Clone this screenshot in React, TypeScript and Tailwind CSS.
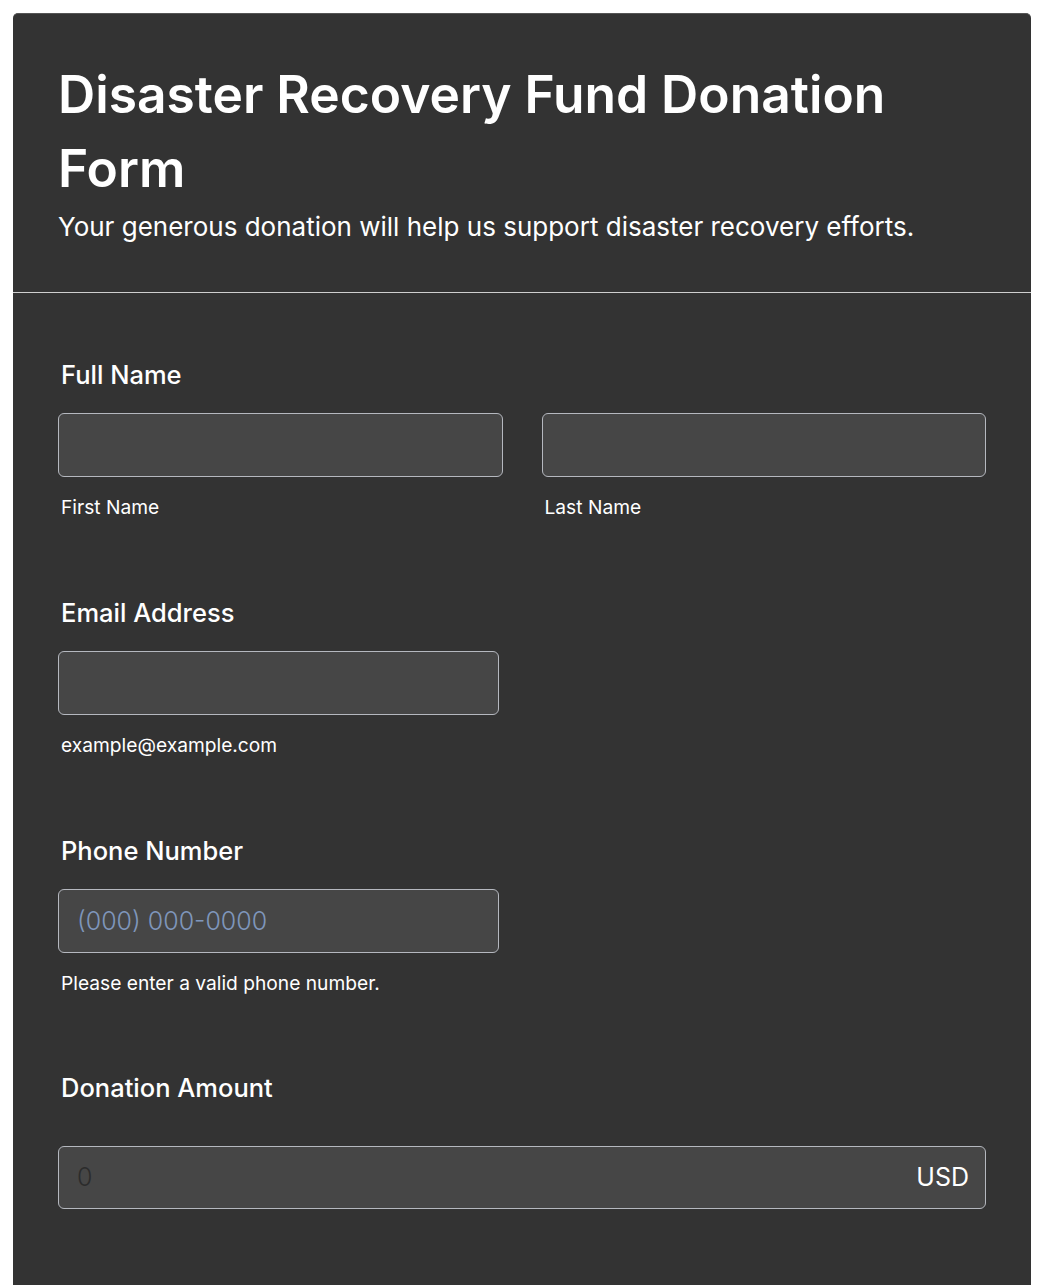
import React from "react";

const inputCls =
  "block h-[64px] rounded-[6px] border border-[#b5b8bf] bg-[#464646] px-[18px] text-[25px] text-white outline-none";

function Label({ children }: { children: React.ReactNode }) {
  return (
    <div className="pl-[3px] text-[25.5px] font-medium leading-[32px] text-white">{children}</div>
  );
}

function Sub({ children }: { children: React.ReactNode }) {
  return (
    <div className="mt-[18px] pl-[3px] text-[19.2px] leading-[24px] text-white">{children}</div>
  );
}

export default function App() {
  return (
    <div
      className="min-h-[1285px] bg-white px-[13px] pt-[13px]"
      style={{ fontFamily: "Inter, 'Noto Sans', sans-serif" }}
    >
      <div className="rounded-t-[5px] border-t border-[#555] bg-[#333333] pb-[80px]">
        <div className="border-b border-[#cfcfcf] px-[45px] pt-[43px] pb-[47px]">
          <h1 className="text-[51.5px] font-semibold leading-[74px] text-white">
            Disaster Recovery Fund Donation Form
          </h1>
          <p className="mt-[4px] text-[26px] leading-[36px] text-white">
            Your generous donation will help us support disaster recovery efforts.
          </p>
        </div>
        <div className="px-[45px] pt-[66px]">
          <Label>Full Name</Label>
          <div className="mt-[22px] grid grid-cols-2 gap-x-[39px]">
            <div>
              <input className={inputCls + " w-full"} />
              <Sub>First Name</Sub>
            </div>
            <div>
              <input className={inputCls + " w-full"} />
              <Sub>Last Name</Sub>
            </div>
          </div>

          <div className="mt-[78px]">
            <Label>Email Address</Label>
            <input className={inputCls + " mt-[22px] w-[441px]"} />
            <Sub>example@example.com</Sub>
          </div>

          <div className="mt-[78px]">
            <Label>Phone Number</Label>
            <input
              className={inputCls + " mt-[22px] w-[441px] font-light placeholder:text-[#7f96bb]"}
              placeholder="(000) 000-0000"
            />
            <Sub>Please enter a valid phone number.</Sub>
          </div>

          <div className="mt-[77px]">
            <Label>Donation Amount</Label>
            <div className="mt-[42px] flex h-[63px] items-center rounded-[6px] border border-[#b5b8bf] bg-[#464646] pl-[18px] pr-[16px]">
              <input
                className="min-w-0 flex-1 bg-transparent text-[25px] font-light text-white outline-none placeholder:text-[#2c2c2c]"
                placeholder="0"
              />
              <span className="text-[25px] text-white">USD</span>
            </div>
          </div>
        </div>
      </div>
    </div>
  );
}
